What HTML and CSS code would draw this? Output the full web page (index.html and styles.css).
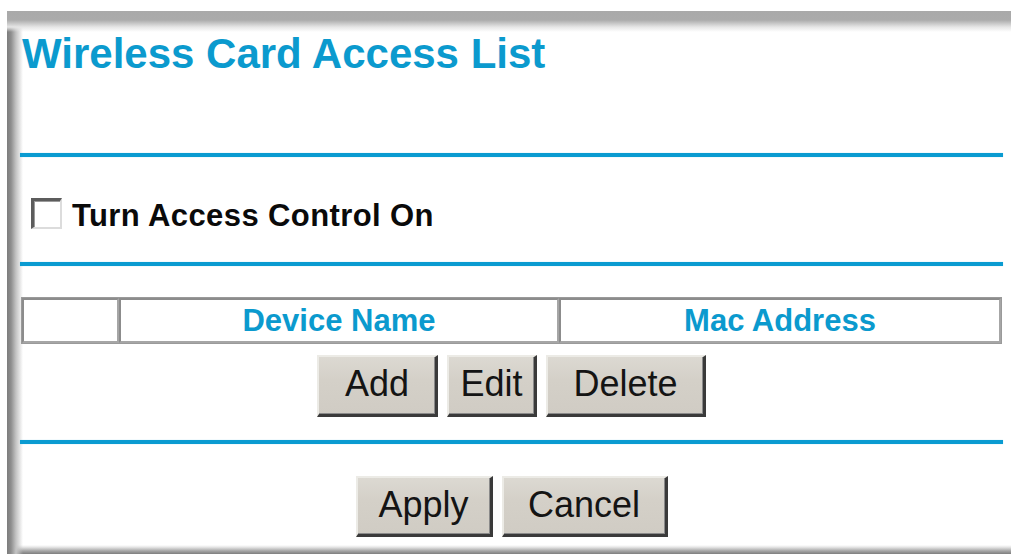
FILE: index.html
```html
<!DOCTYPE html>
<html lang="en">
<head>
<meta charset="utf-8">
<title>Wireless Card Access List</title>
<link rel="stylesheet" href="styles.css">
</head>
<body>
<div class="frame">
  <form class="panel">
    <h1 class="title">Wireless Card Access List</h1>
    <div class="rule rule-top"></div>

    <label class="toggle">
      <span class="checkbox"></span>
      <span class="toggle-text">Turn Access Control On</span>
    </label>

    <div class="rule rule-mid"></div>

    <table class="access-table">
      <colgroup>
        <col class="col-sel">
        <col class="col-name">
        <col class="col-mac">
      </colgroup>
      <tr>
        <td></td>
        <td class="head">Device Name</td>
        <td class="head">Mac Address</td>
      </tr>
    </table>

    <div class="actions actions-list">
      <button type="button" class="btn btn-add">Add</button>
      <button type="button" class="btn btn-edit">Edit</button>
      <button type="button" class="btn btn-delete">Delete</button>
    </div>

    <div class="rule rule-bottom"></div>

    <div class="actions actions-form">
      <button type="button" class="btn btn-apply">Apply</button>
      <button type="button" class="btn btn-cancel">Cancel</button>
    </div>
  </form>
</div>
</body>
</html>
```

FILE: styles.css
```css
html, body {
  margin: 0;
  padding: 0;
  background: #ffffff;
}

body {
  font-family: "Liberation Sans", Arial, sans-serif;
  width: 1011px;
  height: 554px;
  overflow: hidden;
}

/* window frame: grey bevel on top, left and bottom */
.frame {
  margin: 11px 0 0 7px;
  height: 543px;
  box-sizing: border-box;
  background:
    linear-gradient(to bottom, #a9a9a9 0, #ababab 9px, #e6e6e6 16px, rgba(255,255,255,0) 21px) top left / 100% 21px no-repeat,
    linear-gradient(to right, #7c7c7c 0, #8e8e8e 4px, #c4c4c4 9px, rgba(255,255,255,0) 16px) top left / 16px 100% no-repeat,
    linear-gradient(to top, #7e7e7e 0, #a4a4a4 3px, #e8e8e8 7px, rgba(255,255,255,0) 9px) bottom left / 100% 9px no-repeat,
    #ffffff;
}

.panel {
  margin: 0;
  padding: 18px 8px 0 13px;
}

.title {
  margin: 0 0 0 2px;
  font-size: 42px;
  line-height: 50px;
  font-weight: bold;
  color: #0b9ace;
  white-space: nowrap;
}

.rule {
  height: 4px;
  background: #0a9bd1;
  box-shadow: 0 0 1px #7fcbe8;
}

.rule-top { margin-top: 74px; }
.rule-mid { margin-top: 28px; }
.rule-bottom { margin-top: 23px; }

.toggle {
  display: flex;
  align-items: flex-start;
  margin: 41px 0 0 11px;
  height: 36px;
}

.checkbox {
  width: 31px;
  height: 31px;
  box-sizing: border-box;
  border-style: solid;
  border-width: 3px 2px 2px 3px;
  border-color: #5c5c5c #dcdcdc #dcdcdc #5c5c5c;
  box-shadow: inset 1px 1px 0 #9a9a9a;
  background: #ffffff;
  flex: none;
}

.toggle-text {
  margin-left: 10px;
  font-size: 31px;
  line-height: 36px;
  font-weight: bold;
  color: #0a0a0a;
  letter-spacing: 0.4px;
  white-space: nowrap;
}

.access-table {
  margin: 31px 0 0 1px;
  width: 981px;
  table-layout: fixed;
  border-collapse: separate;
  border-spacing: 0;
  border: 1px solid #9a9a9a;
}

.col-sel { width: 97px; }
.col-name { width: 440px; }

.access-table td {
  height: 41px;
  padding: 0;
  border-style: solid;
  border-width: 2px;
  border-color: #8c8c8c #a6a6a6 #a6a6a6 #8c8c8c;
}

.head {
  text-align: center;
  font-size: 31px;
  line-height: 41px;
  font-weight: bold;
  color: #0b9ace;
  white-space: nowrap;
}

.actions {
  display: flex;
  justify-content: center;
  gap: 9px;
}

.actions-list { margin-top: 11px; }
.actions-form { margin-top: 32px; }

.btn {
  margin: 0;
  padding: 0 0 4px 0;
  box-sizing: border-box;
  height: 62px;
  font-family: "Liberation Sans", Arial, sans-serif;
  font-size: 36px;
  line-height: 54px;
  color: #141414;
  background: linear-gradient(to bottom, #dcd9d2 0, #d4d0c8 40%, #d0ccc4 100%);
  border-style: solid;
  border-width: 2px 3px 3px 2px;
  border-color: #ecebe6 #3a3a3a #3a3a3a #ecebe6;
  box-shadow: inset -1px -1px 0 #8a8a8a;
  border-radius: 0;
  white-space: nowrap;
}

.btn-add { width: 121px; }
.btn-edit { width: 90px; }
.btn-delete { width: 160px; }

.actions-form .btn { height: 61px; }
.btn-apply { width: 137px; }
.btn-cancel { width: 166px; }
```
